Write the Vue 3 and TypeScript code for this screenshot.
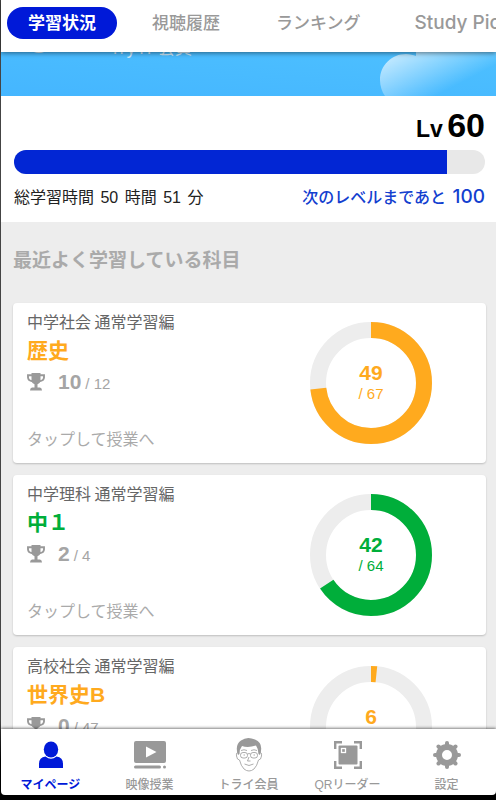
<script setup lang="ts">
interface Subject {
  id: string
  course: string
  name: string
  tone: 'orange' | 'green'
  trophies: number
  trophyTotal: number
  done: number
  total: number
}

const tabs: string[] = ['学習状況', '視聴履歴', 'ランキング', 'Study Picks']

const subjects: Subject[] = [
  { id: 'history', course: '中学社会 通常学習編', name: '歴史', tone: 'orange', trophies: 10, trophyTotal: 12, done: 49, total: 67 },
  { id: 'science', course: '中学理科 通常学習編', name: '中１', tone: 'green', trophies: 2, trophyTotal: 4, done: 42, total: 64 },
  { id: 'world', course: '高校社会 通常学習編', name: '世界史B', tone: 'orange', trophies: 0, trophyTotal: 47, done: 6, total: 365 },
]

const RADIUS = 53
const CIRCUMFERENCE = 2 * Math.PI * RADIUS

function arc(s: Subject): string {
  const length = (s.done / s.total) * CIRCUMFERENCE
  return `${length} ${CIRCUMFERENCE}`
}
</script>

<template>
  <div class="app">
    <header class="tabs">
      <button
        v-for="(tab, i) in tabs"
        :key="tab"
        type="button"
        class="tab"
        :class="{ active: i === 0 }"
      >{{ tab }}</button>
    </header>

    <main class="content">
      <section class="banner">
        <svg class="cloud" viewBox="0 0 116 44" aria-hidden="true">
          <defs>
            <linearGradient id="cloudFill" gradientUnits="userSpaceOnUse" x1="20" y1="-6" x2="48" y2="48">
              <stop offset="0" stop-color="#fff" stop-opacity=".72" />
              <stop offset="1" stop-color="#fff" stop-opacity="0" />
            </linearGradient>
          </defs>
          <path d="M36 0H116V44H5C2 40 0 34 0 28C0 13 12 2 26 2C30 2 33 3 36 4Z" fill="url(#cloudFill)" />
        </svg>
        <span class="avatar"></span>
        <span class="member">Try IT 会員</span>
      </section>

      <section class="level">
        <p class="rank"><span class="lv">Lv</span> <span class="lv-value">60</span></p>
        <progress class="bar" value="92" max="100" aria-label="Lv 60"></progress>
        <div class="stats">
          <p class="time">総学習時間 <span class="num">50</span> 時間 <span class="num">51</span> 分</p>
          <p class="next">次のレベルまであと <span class="next-value">100</span></p>
        </div>
      </section>

      <section class="recent">
        <h2 class="heading">最近よく学習している科目</h2>
        <a v-for="s in subjects" :key="s.id" href="#" class="card" :class="s.tone">
          <div class="info">
            <span class="course">{{ s.course }}</span>
            <span class="name">{{ s.name }}</span>
            <span class="trophies">
              <svg class="trophy" viewBox="0 0 18 18" aria-hidden="true">
                <path d="M4.500 0H13.500V8Q13 10.500 10.500 11.300V14.500H13Q15 14.800 15 17.500H3Q3 14.800 5 14.500H7.500V11.300Q5 10.500 4.500 8Z" fill="#999" />
                <path d="M5 2.200H1V4.500Q1.200 7.800 5.500 8.200M13 2.200H17V4.500Q16.800 7.800 12.500 8.200" fill="none" stroke="#999" stroke-width="1.900" />
              </svg>
              <b class="won">{{ s.trophies }}</b>
              <span class="of">/ {{ s.trophyTotal }}</span>
            </span>
            <span class="hint">タップして授業へ</span>
          </div>
          <div class="chart">
            <svg class="ring" viewBox="0 0 122 122" aria-hidden="true">
              <circle cx="61" cy="61" :r="RADIUS" class="track" />
              <circle cx="61" cy="61" :r="RADIUS" class="value" :stroke-dasharray="arc(s)" transform="rotate(-90 61 61)" />
            </svg>
            <div class="count">
              <b class="done">{{ s.done }}</b>
              <span class="total">/ {{ s.total }}</span>
            </div>
          </div>
        </a>
      </section>
    </main>

    <nav class="dock">
      <a href="#" class="item current">
        <svg class="icon" viewBox="0 0 36 36" aria-hidden="true">
          <ellipse cx="18" cy="12.500" rx="7.200" ry="8" fill="currentColor" />
          <path d="M6 31V27Q6 20 12.500 19.500Q18 24 23.500 19.500Q30 20 30 27V31Z" fill="currentColor" />
        </svg>
        <span>マイページ</span>
      </a>
      <a href="#" class="item">
        <svg class="icon" viewBox="0 0 36 36" aria-hidden="true">
          <path fill-rule="evenodd" d="M4 4H32Q34 4 34 6V24Q34 26 32 26H4Q2 26 2 24V6Q2 4 4 4ZM14 9.500V20.500L24.500 15Z" fill="currentColor" />
          <rect x="2" y="28.500" width="27" height="3" rx="1.500" fill="currentColor" />
          <circle cx="32.500" cy="30" r="1.500" fill="currentColor" />
        </svg>
        <span>映像授業</span>
      </a>
      <a href="#" class="item">
        <svg class="icon" viewBox="0 0 36 36" aria-hidden="true">
          <path d="M7 18Q3.500 8 10 3.500Q16 -1 24 2.500Q33 6 29 18L27.500 17Q27.500 12 25 8.500Q17 11 11 9Q8.500 12 8.500 17Z" fill="currentColor" />
          <g fill="none" stroke="currentColor" stroke-width=".8">
            <path d="M8 16Q5 14.500 5.500 19Q6 23 8.500 23Q10 29 13 32Q18 36 23 32Q26 29 27.500 23Q30 23 30.500 19Q31 14.500 28 16" />
            <rect x="9.500" y="15.500" width="7" height="5.500" rx="2.500" />
            <rect x="19.500" y="15.500" width="7" height="5.500" rx="2.500" />
            <path d="M16.500 17Q18 16 19.500 17M10 13.500Q13 12 16 13.500M20 13.500Q23 12 26 13.500M18 20L16.500 24H19.500M13.500 27Q18 30 22.500 27" />
            <path d="M12.500 18H14M22.500 18H24" />
          </g>
        </svg>
        <span>トライ会員</span>
      </a>
      <a href="#" class="item">
        <svg class="icon" viewBox="0 0 36 36" aria-hidden="true">
          <path d="M5.200 12V5.200H12M24 5.200H30.800V12M30.800 24V30.800H24M12 30.800H5.200V24" fill="none" stroke="currentColor" stroke-width="2.400" />
          <rect x="8.500" y="8.500" width="19" height="19" rx="1" fill="currentColor" />
          <rect x="11.500" y="11.500" width="4" height="4" fill="currentColor" stroke="#fff" stroke-width="1.300" />
        </svg>
        <span>QRリーダー</span>
      </a>
      <a href="#" class="item">
        <svg class="icon" viewBox="0 0 36 36" aria-hidden="true">
          <circle cx="18" cy="18" r="8" fill="none" stroke="currentColor" stroke-width="6" />
          <path d="M18 6V9M18 27V30M6 18H9M27 18H30M9.500 9.500L11.500 11.500M24.500 24.500L26.500 26.500M9.500 26.500L11.500 24.500M24.500 11.500L26.500 9.500" stroke="currentColor" stroke-width="4" stroke-linecap="round" />
        </svg>
        <span>設定</span>
      </a>
    </nav>
  </div>
</template>

<style>
body {
  margin: 0;
  background: #000;
}
</style>

<style scoped>
.app {
  display: flex;
  flex-direction: column;
  height: 100vh;
  box-sizing: border-box;
  padding: 0 0 5px 1px;
  background: linear-gradient(#444 0, #444 720px, #000 760px);
  font-family: "Liberation Sans", "Noto Sans CJK JP", sans-serif;
  overflow: hidden;
}
p,
h2 {
  margin: 0;
}
a {
  color: inherit;
  text-decoration: none;
}
.tabs {
  position: relative;
  z-index: 1;
  display: flex;
  flex: none;
  gap: 14px;
  height: 52px;
  box-sizing: border-box;
  padding: 7px 6px 13px;
  background: #fff;
  box-shadow: 0 1px 5px rgba(0, 0, 0, .5);
  overflow: hidden;
}
.tab {
  flex: none;
  height: 32px;
  padding: 0 21px;
  border: 0;
  border-radius: 16px;
  background: none;
  color: #999;
  font: 500 17px/32px Inter, "Noto Sans CJK JP", sans-serif;
  white-space: nowrap;
}
.tab:last-child {
  padding: 0 19px;
  font-size: 19px;
}
.tab.active {
  background: #0019d8;
  color: #fff;
  font-weight: 700;
}
.content {
  flex: 1;
  min-height: 0;
  overflow: hidden;
  background: #ededed;
}
.banner {
  position: relative;
  height: 44px;
  background: linear-gradient(5deg, #45b6ff, #4dc0ff);
  overflow: hidden;
}
.cloud {
  position: absolute;
  top: 0;
  right: 0;
  width: 116px;
  height: 44px;
}
.avatar {
  position: absolute;
  left: 25px;
  top: -25px;
  width: 26px;
  height: 26px;
  border-radius: 50%;
  background: #d5e9f5;
}
.member {
  position: absolute;
  left: 109px;
  top: -17px;
  color: #cfe8f7;
  font: 17px/24px "Noto Sans CJK JP", sans-serif;
}
.level {
  height: 126px;
  box-sizing: border-box;
  padding: 8px 11px 0 13px;
  background: #fff;
}
.rank {
  height: 46px;
  color: #000;
  font-weight: 700;
  line-height: 42px;
  text-align: right;
}
.lv {
  font-size: 23px;
}
.lv-value {
  font-size: 34px;
}
.bar {
  display: block;
  width: 100%;
  height: 24px;
  border: 0;
  border-radius: 12px;
  appearance: none;
  background: #e8e8e8;
  overflow: hidden;
}
.bar::-webkit-progress-bar {
  background: #e8e8e8;
}
.bar::-webkit-progress-value {
  background: #0226d4;
}
.stats {
  display: flex;
  align-items: baseline;
  justify-content: space-between;
  padding-top: 10px;
  font-size: 16px;
  line-height: 24px;
  white-space: nowrap;
}
.time {
  color: #222;
}
.num {
  padding: 0 2px;
}
.next {
  color: #1340cf;
  font-family: "Noto Sans CJK JP", sans-serif;
  font-weight: 500;
}
.next-value {
  padding-left: 3px;
  font-family: Inter, sans-serif;
  font-size: 19px;
}
.recent {
  display: flex;
  flex-direction: column;
  gap: 12px;
  padding: 25px 10px 0 12px;
}
.heading {
  height: 44px;
  color: #aaa;
  font-size: 19px;
  font-weight: 700;
  line-height: 28px;
}
.card {
  display: grid;
  grid-template-columns: 1fr 230px;
  height: 160px;
  border-radius: 4px;
  background: #fff;
  box-shadow: 0 1px 2px rgba(0, 0, 0, .2);
}
.orange {
  --tone: #ffaa1e;
}
.green {
  --tone: #00ae3a;
}
.info {
  display: flex;
  flex-direction: column;
  padding: 6px 0 0 14px;
  white-space: nowrap;
}
.course {
  color: #666;
  font: 16px/24px "Noto Sans CJK JP", sans-serif;
}
.name {
  color: var(--tone);
  font: 700 21px/36px "Liberation Sans", "Noto Sans CJK JP", sans-serif;
}
.trophies {
  display: flex;
  align-items: baseline;
  height: 26px;
  color: #a5a5a5;
  line-height: 26px;
}
.trophy {
  align-self: center;
  width: 18px;
  height: 18px;
  margin-right: 13px;
}
.won {
  font-size: 21px;
}
.of {
  padding-left: 4px;
  font-size: 15px;
}
.hint {
  padding-top: 31px;
  color: #aaa;
  font: 16px/24px "Noto Sans CJK JP", sans-serif;
}
.chart {
  display: grid;
  place-items: center;
}
.ring,
.count {
  grid-area: 1 / 1;
}
.ring {
  width: 122px;
  height: 122px;
}
.track,
.value {
  fill: none;
  stroke: #ededed;
  stroke-width: 16;
}
.value {
  stroke: var(--tone);
}
.count {
  display: flex;
  flex-direction: column;
  align-items: center;
  color: var(--tone);
}
.done {
  font-size: 21px;
  line-height: 22px;
}
.total {
  font-size: 15px;
  line-height: 20px;
}
.dock {
  position: relative;
  z-index: 1;
  display: grid;
  grid-template-columns: repeat(5, 1fr);
  flex: none;
  height: 66px;
  border-radius: 0 0 4px 4px;
  background: #fff;
  box-shadow: 0 -1px 3px rgba(0, 0, 0, .5);
}
.item {
  display: flex;
  flex-direction: column;
  align-items: center;
  padding-top: 8px;
  color: #999;
  font: 500 12px/24px "Liberation Sans", "Noto Sans CJK JP", sans-serif;
  white-space: nowrap;
}
.icon {
  width: 36px;
  height: 36px;
}
.current {
  color: #0019d8;
  font-weight: 700;
}
</style>
